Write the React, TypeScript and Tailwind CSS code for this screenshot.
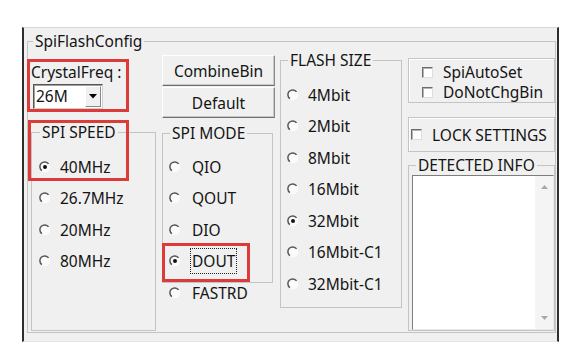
import React from 'react';

const Radio = ({ checked = false }: { checked?: boolean }) => (
  <svg width="12" height="12" viewBox="0 0 12 12" className="shrink-0">
    <circle cx="6" cy="6" r="5.2" fill="#fbfbfb" />
    <path d="M9.6 2.9 A4.8 4.8 0 1 0 2.9 9.6" fill="none" stroke="#575757" strokeWidth="1.5" />
    {checked && <circle cx="6" cy="6" r="2" fill="#111" />}
  </svg>
);

const RadioRow = ({
  label,
  checked = false,
  gap = 'ml-[9px]',
}: {
  label: string;
  checked?: boolean;
  gap?: string;
}) => (
  <div className="flex h-[31.5px] items-center">
    <Radio checked={checked} />
    <span className={gap}>{label}</span>
  </div>
);

const Checkbox = () => (
  <span className="block h-[11px] w-[11px] shrink-0 border border-t-[#6d6d6d] border-l-[#6d6d6d] border-r-[#dedede] border-b-[#dedede] bg-white shadow-[inset_1px_1px_0_#b4b4b4]" />
);

const Group = ({
  title,
  className,
  children,
}: {
  title: string;
  className: string;
  children?: React.ReactNode;
}) => (
  <fieldset className={`border border-[#c4c4c4] ${className}`}>
    <legend className="ml-[7px] px-[2px] leading-[16px]">{title}</legend>
    {children}
  </fieldset>
);

const WinButton = ({ label, className }: { label: string; className: string }) => (
  <button
    className={`flex w-[113px] h-[31px] items-center justify-center bg-[#f0f0f0] border border-t-white border-l-white border-r-[#8a8a8a] border-b-[#6e6e6e] shadow-[inset_-1px_-1px_0_#c8c8c8] ${className}`}
  >
    {label}
  </button>
);

export default function App() {
  return (
    <div className="relative w-[577px] h-[353px] bg-white pl-[22px] pt-[27px] font-['Noto_Sans',sans-serif] text-[15.5px] leading-[18px] text-[#141414]">
      {/* dialog panel */}
      <div className="w-[537px] h-[315px] bg-[#f0f0f0] border-l-2 border-r-2 border-t border-b border-l-[#2e2e2e] border-r-[#2e2e2e] border-t-[#d6d6d6] border-b-[#e4e4e4] pl-[3px] pt-[5px]">
        <fieldset className="w-[529px] h-[300px] border border-[#c4c4c4]">
          <legend className="ml-[5px] px-[2px] leading-[16px]">SpiFlashConfig</legend>

          <div className="flex h-[282px]">
            {/* crystal + spi speed */}
            <div className="flex w-[128px] flex-col">
              <div className="mt-[14px] h-[18px] pl-[3px]">CrystalFreq :</div>
              <div className="ml-[5px] mt-[3px] flex h-[25px] w-[70px] bg-white border border-t-[#555] border-l-[#555] border-r-[#d0d0d0] border-b-[#d0d0d0] shadow-[inset_1px_1px_0_#a0a0a0]">
                <span className="pl-[2px] leading-[23px]">26M</span>
                <span className="ml-auto mr-[1px] mt-[1px] flex h-[21px] w-[16px] items-center justify-center bg-[#f0f0f0] border border-t-white border-l-white border-r-[#8a8a8a] border-b-[#8a8a8a]">
                  <svg width="8" height="5" viewBox="0 0 8 5">
                    <path d="M0 0 H8 L4 4.5 Z" fill="#000" />
                  </svg>
                </span>
              </div>
              <fieldset className="ml-[3px] mt-[15px] h-[207px] w-[125px] border border-[#c4c4c4]">
                <legend className="ml-[8px] px-[2px] leading-[16px]">SPI SPEED</legend>
                <div className="pl-[7px] pt-[11px]">
                  <RadioRow label="40MHz" checked />
                  <RadioRow label="26.7MHz" />
                  <RadioRow label="20MHz" />
                  <RadioRow label="80MHz" />
                </div>
              </fieldset>
            </div>

            {/* buttons + spi mode */}
            <div className="ml-[5px] flex w-[114px] flex-col">
              <WinButton label="CombineBin" className="ml-[1px] mt-[6px]" />
              <WinButton label="Default" className="ml-[1px] mt-[1px]" />
              <Group title="SPI MODE" className="ml-[1px] mt-[7px] h-[158px] w-[111px]">
                <div className="pl-[6px] pt-[10px]">
                  <RadioRow label="QIO" gap="ml-[11px]" />
                  <RadioRow label="QOUT" gap="ml-[11px]" />
                  <RadioRow label="DIO" gap="ml-[11px]" />
                  <div className="flex h-[31.5px] items-center">
                    <Radio checked />
                    <span className="ml-[9px] border border-dotted border-[#222] px-[1px] py-[3px]">DOUT</span>
                  </div>
                </div>
              </Group>
              <div className="flex h-[20px] items-center pl-[8px]">
                <Radio />
                <span className="ml-[11px]">FASTRD</span>
              </div>
            </div>

            {/* flash size */}
            <div className="ml-[5px] w-[122px]">
              <Group title="FLASH SIZE" className="mt-[3px] h-[256px] w-[122px]">
                <div className="pl-[6px] pt-[11px]">
                  <RadioRow label="4Mbit" />
                  <RadioRow label="2Mbit" />
                  <RadioRow label="8Mbit" />
                  <RadioRow label="16Mbit" />
                  <RadioRow label="32Mbit" checked />
                  <RadioRow label="16Mbit-C1" />
                  <RadioRow label="32Mbit-C1" />
                </div>
              </Group>
            </div>

            {/* options + detected info */}
            <div className="ml-[6px] flex w-[147px] flex-col">
              <div className="mt-[9px] h-[45px] border border-[#c4c4c4] shadow-[inset_1px_1px_0_#fff] pl-[13px] pt-[3px]">
                <div className="flex h-[20px] items-center">
                  <Checkbox />
                  <span className="ml-[10px]">SpiAutoSet</span>
                </div>
                <div className="flex h-[20px] items-center">
                  <Checkbox />
                  <span className="ml-[10px]">DoNotChgBin</span>
                </div>
              </div>
              <div className="mt-[14px] flex h-[35px] items-center border border-[#c4c4c4] shadow-[inset_1px_1px_0_#fff] pl-[2px]">
                <Checkbox />
                <span className="ml-[10px]">LOCK SETTINGS</span>
              </div>
              <Group title="DETECTED INFO" className="mt-[5px] h-[174px] w-[147px]">
                <div className="ml-[3px] mt-[2px] flex h-[155px] bg-white border border-t-[#7d7d7d] border-l-[#7d7d7d] border-r-[#e8e8e8] border-b-[#e8e8e8]">
                  <div className="flex-1" />
                  <div className="flex w-[18px] flex-col items-center justify-between bg-[#f4f4f4] py-[9px]">
                    <svg width="7" height="4" viewBox="0 0 7 4">
                      <path d="M0 4 H7 L3.5 0 Z" fill="#a8a8a8" />
                    </svg>
                    <svg width="7" height="4" viewBox="0 0 7 4">
                      <path d="M0 0 H7 L3.5 4 Z" fill="#a8a8a8" />
                    </svg>
                  </div>
                </div>
              </Group>
            </div>
          </div>
        </fieldset>
      </div>

      {/* red annotation boxes */}
      <div className="absolute left-[27px] top-[59px] h-[53px] w-[102px] border-[3px] border-[#dd3a3a]" />
      <div className="absolute left-[28px] top-[120px] h-[61px] w-[101px] border-[3px] border-[#dd3a3a]" />
      <div className="absolute left-[162px] top-[243px] h-[39px] w-[88px] border-[3px] border-[#dd3a3a]" />
    </div>
  );
}
